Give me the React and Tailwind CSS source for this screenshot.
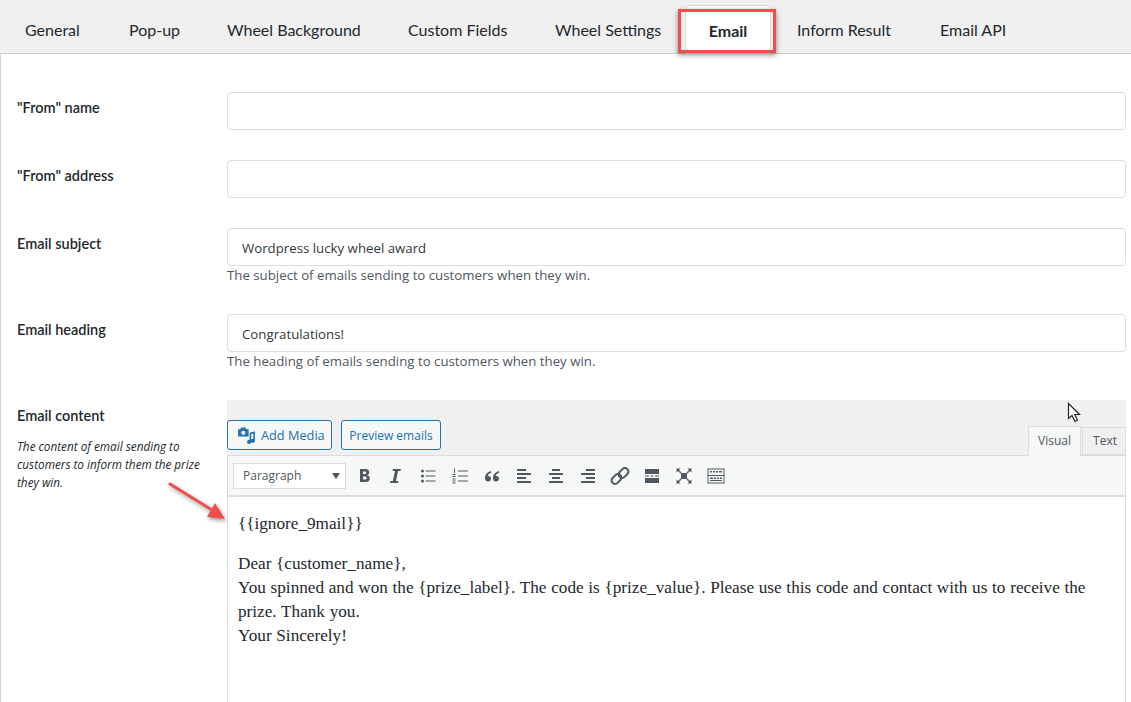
const tabs = [
  { name: "General", width: "w-[104px]" },
  { name: "Pop-up", width: "w-[98px]" },
  { name: "Wheel Background", width: "w-[181px]" },
  { name: "Custom Fields", width: "w-[147px]" },
  { name: "Wheel Settings", width: "w-[154px]" },
  { name: "Email", active: true },
  { name: "Inform Result", width: "w-[143px] ml-[2px]" },
  { name: "Email API", width: "w-[100px]" },
];

const Field = ({ label, value, help, className }) => (
  <div className={`flex ${className}`}>
    <label className="w-[210px] shrink-0 pt-[5.5px] text-[14.5px] leading-5 font-semibold font-['Lato',sans-serif] text-[#23282d]">{label}</label>
    <div className="flex-1">
      <div className="h-[38px] border border-[#dedede] rounded-[4px] bg-white px-[14px] text-[13.25px] leading-[38px] text-[#32373c] font-['Open_Sans',sans-serif]">{value}</div>
      {help && <p className="mt-[-1px] text-[13.25px] leading-5 text-[#50575e] font-['Open_Sans',sans-serif]">{help}</p>}
    </div>
  </div>
);

const Icon = ({ children }) => (
  <svg width="20" height="20" viewBox="0 0 20 20" fill="#50575e" className="shrink-0">{children}</svg>
);

const toolbar = [
  <path key="b" d="M6 3h5.2c2.4 0 4 1.2 4 3.2 0 1.4-.8 2.4-2 2.9v.1c1.6.4 2.6 1.5 2.6 3.200 0 2.300-1.800 3.600-4.500 3.600H6V3zm3 5h1.700c1 0 1.500-.5 1.500-1.300S11.700 5.500 10.700 5.500H9V8zm0 2.400v3.100h2c1.100 0 1.700-.6 1.700-1.600s-.6-1.500-1.700-1.500H9z" />,
  <path key="i" d="M7 3h8l-.5 2h-2.400l-2.200 10h2.400l-.4 2H4l.4-2h2.400L9 5H6.600L7 3z" />,
  <g key="ul"><circle cx="4.500" cy="5" r="1.500" /><circle cx="4.500" cy="10" r="1.500" /><circle cx="4.500" cy="15" r="1.500" /><rect x="7.500" y="4.500" width="10" height="1" /><rect x="7.500" y="9.500" width="10" height="1" /><rect x="7.500" y="14.500" width="10" height="1" /></g>,
  <g key="ol"><rect x="8" y="4.500" width="10" height="1" /><rect x="8" y="9.500" width="10" height="1" /><rect x="8" y="14.500" width="10" height="1" /><rect x="4" y="2.500" width="1" height="4.500" /><rect x="2.500" y="8" width="3" height="1" /><rect x="2.500" y="10" width="3" height="1" /><rect x="2.500" y="12.500" width="3" height="1" /><rect x="2.500" y="14.500" width="3" height="1" /><rect x="2.500" y="16.500" width="3" height="1" /></g>,
  <path key="q" d="M9 5C5.500 6 3 8.500 3 12c0 2 1.200 3.500 3 3.500S9 14.300 9 12.700c0-1.600-1.100-2.700-2.600-2.700-.3 0-.6 0-.8.100C6 8.600 7.400 7.300 9.300 6.500L9 5zm8 0c-3.500 1-6 3.500-6 7 0 2 1.200 3.500 3 3.500s3-1.200 3-2.800c0-1.600-1.100-2.700-2.600-2.700-.3 0-.6 0-.8.100.4-1.500 1.800-2.800 3.700-3.600L17 5z" />,
  <path key="al" d="M3 4h9v2H3V4zm0 4h14v2H3V8zm0 4h9v2H3v-2zm0 4h14v2H3v-2z" transform="translate(0 -1)" />,
  <path key="ac" d="M6 4h8v2H6V4zM3 8h14v2H3V8zm3 4h8v2H6v-2zm-3 4h14v2H3v-2z" transform="translate(0 -1)" />,
  <path key="ar" d="M8 4h9v2H8V4zM3 8h14v2H3V8zm5 4h9v2H8v-2zm-5 4h14v2H3v-2z" transform="translate(0 -1)" />,
  <g key="link" fill="none" stroke="#50575e" strokeWidth="2"><rect x="10" y="1.500" width="7" height="11" rx="3.500" transform="rotate(45 13.500 7)" /><rect x="3" y="7.500" width="7" height="11" rx="3.500" transform="rotate(45 6.500 13)" /></g>,
  <path key="more" d="M3 3h14v5H3V3zm0 9h14v5H3v-5zm0-2.500h4v1H3v-1zm5.500 0h3v1h-3v-1zm4.500 0h4v1h-4v-1z" />,
  <path key="full" d="M7 7h6v6H7V7zM2.500 2.500h4L5 4l2.500 2.500-1 1L4 5 2.500 6.500v-4zm15 0v4L16 5l-2.500 2.500-1-1L15 4l-1.500-1.500h4zm-15 15v-4L4 15l2.500-2.500 1 1L5 16l1.500 1.500h-4zm15 0h-4L15 16l-2.500-2.500 1-1L16 15l1.500-1.500v4z" />,
  <path key="kb" fillRule="evenodd" d="M1.500 2.500h17v15h-17v-15zm1 1v5.500h15V3.500h-15zm0 6.500v6.500h15V10h-15zM4 5h2v1.500H4V5zm3 0h2v1.500H7V5zm3 0h2v1.500h-2V5zm3 0h3v1.500h-3V5zM4 11.500h3V13H4v-1.500zm4 0h2V13H8v-1.500zm3 0h2V13h-2v-1.500zm3 0h2V13h-2v-1.500zM4 14h12v1H4v-1z" />,
];

export default function App() {
  return (
    <div className="relative h-[702px] w-[1131px] overflow-hidden bg-white">
      {/* Tabs */}
      <div className="flex h-[54px] items-end border-b border-[#cfcfcf] bg-[#f0f0f0] pl-[1px] font-['Lato',sans-serif] text-[16px] text-[#23282d]">
        {tabs.map((tab) =>
          tab.active ? (
            <div key={tab.name} className="mb-[-1px] flex h-[49px] w-[86px] items-center justify-center rounded-t-[5px] border border-b-0 border-[#dedede] bg-white pt-[1px] font-bold">
              {tab.name}
            </div>
          ) : (
            <div key={tab.name} className={`flex h-[48px] items-center pl-[24px] pt-[1px] ${tab.width}`}>
              {tab.name}
            </div>
          )
        )}
      </div>

      {/* Form */}
      <div className="h-[648px] border-l border-[#d4d4d4] pl-[16px] pr-[5px] pt-[38px]">
        <Field label={'"From" name'} className="mb-[30px]" />
        <Field label={'"From" address'} className="mb-[30px]" />
        <Field label="Email subject" value="Wordpress lucky wheel award" help="The subject of emails sending to customers when they win." className="mb-[29px]" />
        <Field label="Email heading" value="Congratulations!" help="The heading of emails sending to customers when they win." className="mb-[29px]" />

        <div className="flex">
          <div className="w-[210px] shrink-0 pt-[5.5px] text-[#23282d]">
            <div className="font-['Lato',sans-serif] text-[14.5px] leading-5 font-semibold">Email content</div>
            <p className="mt-[11.5px] w-[190px] font-['Open_Sans',sans-serif] text-[11.75px] leading-[18px] italic">The content of email sending to customers to inform them the prize they win.</p>
          </div>

          <div className="flex-1 font-['Open_Sans',sans-serif]">
            <div className="relative flex h-[55px] items-end gap-[9px] bg-[#f0f0f0] pb-[5px]">
              <button className="flex h-[30px] w-[105px] items-center gap-[5px] rounded-[3px] border border-[#2271b1] bg-[#f6f7f7] pl-[9px] pt-[1px] text-[12.75px] text-[#2271b1]">
                <svg width="19" height="19" viewBox="0 0 18 18" fill="#2271b1">
                  <path fillRule="evenodd" d="M1 3h2l1-1.500h4L9 3h2v7H1V3zm5 1.500a2 2 0 1 0 0 4 2 2 0 0 0 0-4z" />
                  <path d="M12 6.500l5-1.500v9a2 2 0 1 1-1.500-1.900V7l-2 .6V15a2 2 0 1 1-1.500-1.900V6.500z" />
                </svg>
                Add Media
              </button>
              <button className="h-[30px] w-[100px] rounded-[3px] border border-[#2271b1] bg-[#f6f7f7] pt-[1px] text-[12px] text-[#2271b1]">Preview emails</button>
              <div className="absolute bottom-[-1px] right-0 flex items-end text-[12px] leading-none">
                <div className="flex h-[30px] w-[53px] items-center justify-center border border-b-0 border-[#dcdcde] bg-[#f6f7f7] pb-[2px] text-[#50575e]">Visual</div>
                <div className="mb-[1px] ml-[1px] flex h-[28px] w-[44px] items-center justify-center border border-[#dcdcde] bg-[#f0f0f0] pl-[2px] text-[#50575e]">Text</div>
              </div>
            </div>

            <div className="border border-[#dcdcde] bg-white">
              <div className="flex h-[41px] items-center gap-[12px] border-b-2 border-[#dcdcde] bg-[#f6f7f7] pl-[5px]">
                <div className="mr-[-4px] flex h-[26px] w-[113px] items-center justify-between border border-[#dcdcde] bg-white pl-[9px] pr-[5px] text-[12px] text-[#50575e]">
                  Paragraph
                  <span className="h-0 w-0 border-x-[4px] border-t-[6px] border-x-transparent border-t-[#50575e]" />
                </div>
                {toolbar.map((icon, i) => (
                  <Icon key={i}>{icon}</Icon>
                ))}
              </div>
              <div className="h-[300px] pl-[10px] pr-[10px] pt-[15px] font-['Liberation_Serif',serif] text-[17.2px] [word-spacing:0.4px] leading-6 text-[#23282d]">
                <p className="mb-[16px]">{"{{ignore_9mail}}"}</p>
                <p>{"Dear {customer_name},"}</p>
                <p>{"You spinned and won the {prize_label}. The code is {prize_value}. Please use this code and contact with us to receive the prize. Thank you."}</p>
                <p>Your Sincerely!</p>
              </div>
            </div>
          </div>
        </div>
      </div>

      {/* Annotations */}
      <div className="absolute left-[678px] top-[9px] h-[44px] w-[98px] border-[3px] border-[#f04e4e] shadow-[0_2px_5px_rgba(0,0,0,0.45)]" />
      <svg className="absolute left-[165px] top-[478px]" width="62" height="46" viewBox="0 0 62 46" style={{ filter: "drop-shadow(1px 2px 2px rgba(0,0,0,0.4))" }}>
        <path d="M5 6L47 32" stroke="#f04e4e" strokeWidth="3" strokeLinecap="round" />
        <path d="M60 41L42 39L50 25Z" fill="#f04e4e" />
      </svg>
      <svg className="absolute left-[1067px] top-[402px]" width="15" height="21" viewBox="0 0 15 21">
        <path d="M1.500 1.500V16.500L5 13.500L8 19.500L10.500 18L7.700 12.500H12.500Z" fill="white" stroke="#222" strokeWidth="1.200" />
      </svg>
    </div>
  );
}
